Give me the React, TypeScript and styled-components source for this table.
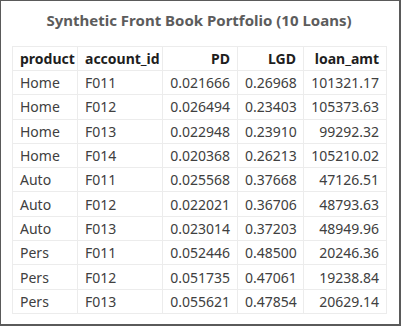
import styled, { createGlobalStyle } from "styled-components";

const loans = [
  ["Home", "F011", "0.021666", "0.26968", "101321.17"],
  ["Home", "F012", "0.026494", "0.23403", "105373.63"],
  ["Home", "F013", "0.022948", "0.23910", "99292.32"],
  ["Home", "F014", "0.020368", "0.26213", "105210.02"],
  ["Auto", "F011", "0.025568", "0.37668", "47126.51"],
  ["Auto", "F012", "0.022021", "0.36706", "48793.63"],
  ["Auto", "F013", "0.023014", "0.37203", "48949.96"],
  ["Pers", "F011", "0.052446", "0.48500", "20246.36"],
  ["Pers", "F012", "0.051735", "0.47061", "19238.84"],
  ["Pers", "F013", "0.055621", "0.47854", "20629.14"],
];

const columns = [
  { name: "product", width: 65, num: false },
  { name: "account_id", width: 85, num: false },
  { name: "PD", width: 75, num: true },
  { name: "LGD", width: 66, num: true },
  { name: "loan_amt", width: 83, num: true },
];

const App = () => {
  return (
    <>
      <Global />
      <Frame>
        <Title>Synthetic Front Book Portfolio (10 Loans)</Title>
        <Table>
          <colgroup>
            {columns.map((c) => (
              <col key={c.name} style={{ width: c.width }} />
            ))}
          </colgroup>
          <thead>
            <tr>
              {columns.map((c) => (
                <Head key={c.name} num={c.num}>
                  {c.name}
                </Head>
              ))}
            </tr>
          </thead>
          <tbody>
            {loans.map((row, i) => (
              <tr key={i}>
                {row.map((v, j) => (
                  <Cell key={j} num={columns[j].num}>
                    {v}
                  </Cell>
                ))}
              </tr>
            ))}
          </tbody>
        </Table>
      </Frame>
    </>
  );
};

export default App;

const Global = createGlobalStyle`
    html, body {
        margin: 0;
        padding: 0;
        background: #ffffff;
    }
`;

const Frame = styled.div`
    width: 401px;
    height: 326px;
    box-sizing: border-box;
    border: 1px solid #5a5a5a;
    border-right-width: 2px;
    border-bottom-width: 2px;
    padding: 8px 0 0 11px;
    font-family: "Noto Sans", "Open Sans", sans-serif;
    background: #ffffff;
`;

const Title = styled.div`
    width: 374px;
    text-align: center;
    font-size: 15px;
    font-weight: 700;
    color: #5c5c5c;
    line-height: 22px;
    margin-bottom: 15px;
`;

const Table = styled.table`
    border-collapse: collapse;
    table-layout: fixed;
    width: 374px;
    border: 1px solid #ececec;
`;

const Head = styled.th<{ num: boolean }>`
    height: 23px;
    padding: 0 7px;
    font-size: 14px;
    font-weight: 700;
    color: #1e1e1e;
    text-align: ${(p) => (p.num ? "right" : "left")};
    border: 1px solid #ececec;
    white-space: nowrap;
`;

const Cell = styled.td<{ num: boolean }>`
    height: 23.3px;
    padding: 0 7px;
    font-size: 14px;
    color: #404040;
    text-align: ${(p) => (p.num ? "right" : "left")};
    border: 1px solid #ececec;
    white-space: nowrap;
`;
